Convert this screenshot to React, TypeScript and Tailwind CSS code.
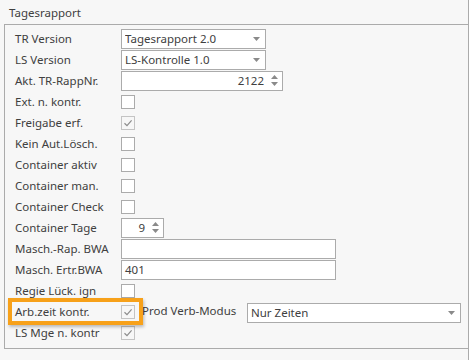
import React from 'react';

const font = { fontFamily: '"Noto Sans", "Open Sans", sans-serif' };

function Check() {
  return (
    <svg width="10" height="10" viewBox="0 0 10 10" className="block">
      <path d="M1.5 5.2 L4 7.6 L8.6 2.4" fill="none" stroke="#8c8c8c" strokeWidth="1.2" />
    </svg>
  );
}

function Box({ checked }: { checked?: boolean }) {
  return checked ? (
    <div className="w-[14px] h-[14px] border border-[#c4c4c4] bg-[#f7f7f7] flex items-center justify-center">
      <Check />
    </div>
  ) : (
    <div className="w-[14px] h-[14px] border border-[#ababab] bg-white" />
  );
}

function Arrow() {
  return (
    <svg width="7" height="4" viewBox="0 0 7 4" className="block">
      <path d="M0 0 H7 L3.5 4 Z" fill="#8a8a8a" />
    </svg>
  );
}

function Combo({ value, w }: { value: string; w: string }) {
  return (
    <div className={`${w} h-[20px] border border-[#ababab] bg-white flex items-center pl-[3px] pr-[5px] text-[11.5px] text-[#404040]`}>
      <span className="flex-1 truncate">{value}</span>
      <Arrow />
    </div>
  );
}

function Spin({ value, w }: { value: string; w: string }) {
  return (
    <div className={`${w} h-[20px] border border-[#ababab] bg-white flex items-center pr-[4px] text-[11.5px] text-[#404040]`}>
      <span className="flex-1 text-right pr-[7px]">{value}</span>
      <div className="flex flex-col gap-[3px]">
        <svg width="7" height="4" viewBox="0 0 7 4" className="block">
          <path d="M0 4 H7 L3.5 0 Z" fill="#8a8a8a" />
        </svg>
        <svg width="7" height="4" viewBox="0 0 7 4" className="block">
          <path d="M0 0 H7 L3.5 4 Z" fill="#8a8a8a" />
        </svg>
      </div>
    </div>
  );
}

function Text({ value }: { value?: string }) {
  return (
    <div className="w-[215px] h-[20px] border border-[#ababab] bg-white flex items-center pl-[3px] text-[11.5px] text-[#404040]">
      {value}
    </div>
  );
}

function Row({ label, children }: { label: string; children: React.ReactNode }) {
  return (
    <div className="h-[21px] flex items-center">
      <div className="w-[106px] shrink-0 text-[11.5px] text-[#404040] whitespace-nowrap">{label}</div>
      {children}
    </div>
  );
}

export default function App() {
  return (
    <div style={font} className="w-[469px] h-[360px] bg-[#f7f7f7] border-r border-[#ababab] pl-[4px] pt-[5px]">
      <div className="h-[19px] pl-[5px] text-[11.5px] text-[#404040] leading-[16px]">Tagesrapport</div>
      <div className="h-[325px] border-t border-l border-b border-[#ababab] pl-[10px] pt-[3px]">
        <Row label="TR Version"><Combo value="Tagesrapport 2.0" w="w-[145px]" /></Row>
        <Row label="LS Version"><Combo value="LS-Kontrolle 1.0" w="w-[145px]" /></Row>
        <Row label="Akt. TR-RappNr."><Spin value="2122" w="w-[162px]" /></Row>
        <Row label="Ext. n. kontr."><Box /></Row>
        <Row label="Freigabe erf."><Box checked /></Row>
        <Row label="Kein Aut.Lösch."><Box /></Row>
        <Row label="Container aktiv"><Box /></Row>
        <Row label="Container man."><Box /></Row>
        <Row label="Container Check"><Box /></Row>
        <Row label="Container Tage"><Spin value="9" w="w-[43px]" /></Row>
        <Row label="Masch.-Rap. BWA"><Text /></Row>
        <Row label="Masch. Ertr.BWA"><Text value="401" /></Row>
        <Row label="Regie Lück. ign"><Box /></Row>
        <div className="relative">
          <Row label="Arb.zeit kontr.">
            <Box checked />
            <span className="ml-[7px] w-[105px] text-[11.5px] text-[#404040] whitespace-nowrap self-start pt-[1px]">Prod Verb-Modus</span>
            <Combo value="Nur Zeiten" w="w-[214px] mt-[3px]" />
          </Row>
          <div className="absolute left-[-7px] top-[-3px] w-[135px] h-[27px] border-[4px] border-[#f7a11a] shadow-[1px_2px_3px_rgba(0,0,0,0.25)]" />
        </div>
        <Row label="LS Mge n. kontr"><Box checked /></Row>
      </div>
    </div>
  );
}
